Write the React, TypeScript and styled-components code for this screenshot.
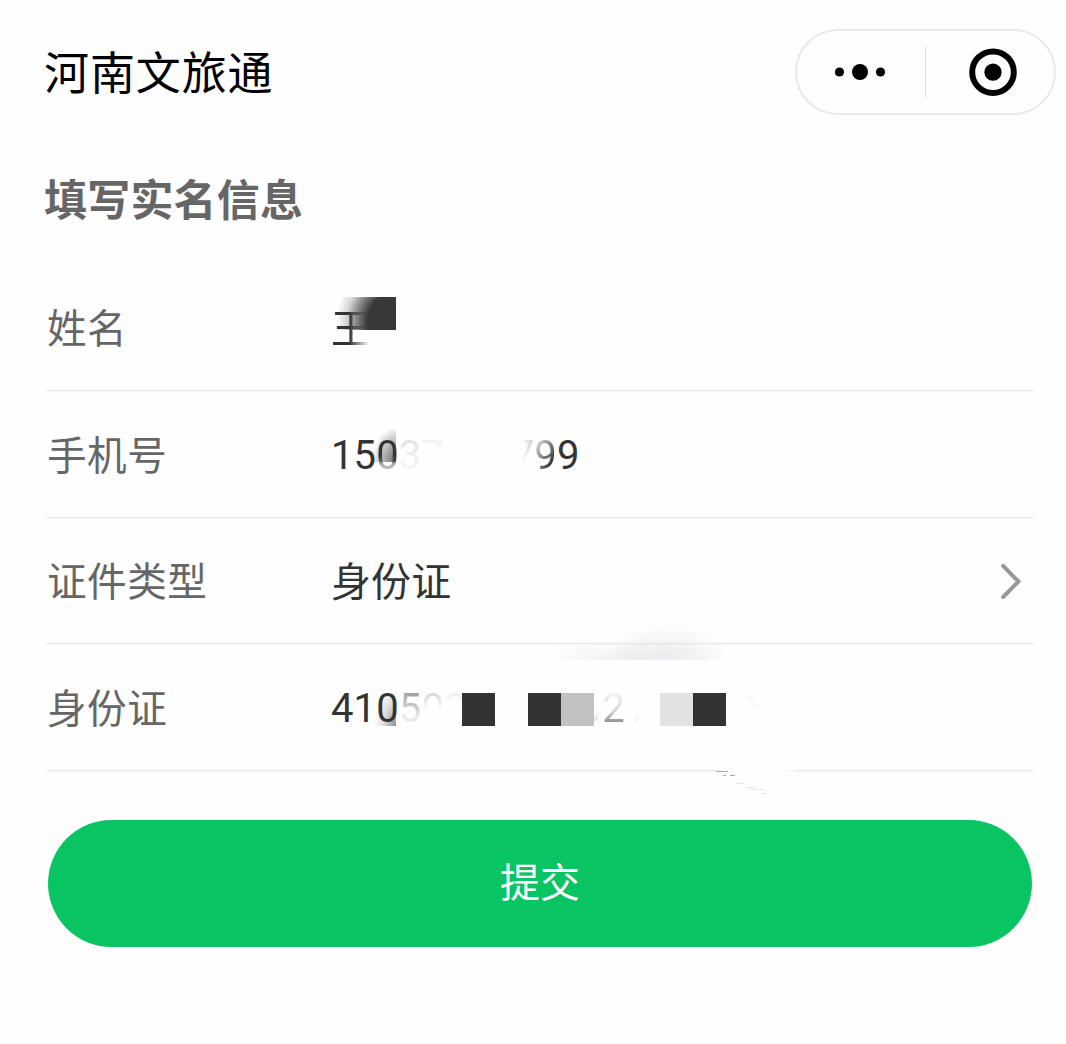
import React from 'react';
import styled, { createGlobalStyle } from 'styled-components';

const GlobalStyle = createGlobalStyle`
  body {
    margin: 0;
    background: #fefefe;
    font-family: Roboto, 'Noto Sans CJK SC', sans-serif;
  }
`;

const Page = styled.main`
  box-sizing: border-box;
  width: 1066px;
  height: 1044px;
  overflow: hidden;
  background: #fefefe;
`;

const TopBar = styled.header`
  display: flex;
  justify-content: space-between;
  align-items: flex-start;
  padding: 29px 10px 0 44px;
  height: 115px;
  box-sizing: border-box;
`;

const AppName = styled.h1`
  margin: 16px 0 0;
  font-size: 45px;
  line-height: 60px;
  letter-spacing: 0.9px;
  font-weight: 400;
  color: #000;
`;

const Capsule = styled.div`
  box-sizing: border-box;
  display: flex;
  align-items: center;
  width: 261px;
  height: 86px;
  border: 2px solid #e9e9e9;
  border-radius: 43px;
`;

const CapsuleButton = styled.button<{ $width: number; $shift: number }>`
  box-sizing: border-box;
  display: flex;
  align-items: center;
  justify-content: center;
  width: ${(p) => p.$width}px;
  padding: 0 0 0 ${(p) => p.$shift}px;
  border: 0;
  background: none;
`;

const CapsuleDivider = styled.span`
  width: 1px;
  height: 52px;
  background: #dedede;
`;

const SectionTitle = styled.h2`
  margin: 56px 0 0 44px;
  font-size: 43px;
  line-height: 60px;
  letter-spacing: 0.2px;
  font-weight: 700;
  color: #666;
`;

const Form = styled.section`
  margin: 33px 32px 0 46px;
`;

const Row = styled.div<{ $height: number }>`
  position: relative;
  box-sizing: border-box;
  display: flex;
  align-items: center;
  height: ${(p) => p.$height}px;
  padding: 5px 11px 0 1px;
  border-bottom: 1px solid #e8e8e8;
  box-shadow: 0 1px 0 #f8f8f8;
`;

const Label = styled.span`
  width: 284px;
  font-size: 39.6px;
  line-height: 60px;
  letter-spacing: 0.5px;
  color: #666;
`;

const Value = styled.span<{ $digits?: boolean }>`
  display: flex;
  flex: 1;
  padding-bottom: ${(p) => (p.$digits ? 2 : 0)}px;
  font-size: 40px;
  line-height: 60px;
  letter-spacing: 0.1px;
  color: #333;
`;

const Glyph = styled.span<{ $mask?: string }>`
  display: inline-block;
  mask-image: ${(p) => p.$mask ?? 'none'};
`;

const Block = styled.span<{ $x: number; $y: number; $w: number; $h?: number; $fill: string }>`
  position: absolute;
  left: ${(p) => p.$x}px;
  top: ${(p) => p.$y}px;
  width: ${(p) => p.$w}px;
  height: ${(p) => p.$h ?? 33}px;
  background: ${(p) => p.$fill};
`;

const Specks = styled.svg`
  position: absolute;
  left: 664px;
  top: 24px;
`;

const Submit = styled.button`
  display: block;
  width: 984px;
  height: 127px;
  margin: 49px 0 0 48px;
  padding: 0;
  border: 0;
  border-radius: 63.5px;
  background: #09c462;
  color: #fff;
  font-family: inherit;
  font-size: 40px;
  line-height: 60px;
`;

type Char = [string, string?];

const solid = (alpha: number) => `linear-gradient(rgba(0,0,0,${alpha}), rgba(0,0,0,${alpha}))`;

const phone: Char[] = [
  ['1'],
  ['5'],
  ['0', 'linear-gradient(175deg, rgba(0,0,0,.3) 34%, #000 50%)'],
  ['3', 'linear-gradient(170deg, rgba(0,0,0,.03) 25%, rgba(0,0,0,.14) 75%)'],
  ['7', 'linear-gradient(rgba(0,0,0,.05) 30%, transparent 45%)'],
  ['0', solid(0)],
  ['0', solid(0)],
  ['0', solid(0)],
  ['7', 'linear-gradient(90deg, transparent 45%, rgba(0,0,0,.25))'],
  ['9', 'linear-gradient(120deg, rgba(0,0,0,.25) 25%, #000 70%)'],
  ['9'],
];

const idNumber: Char[] = [
  ['4'],
  ['1'],
  ['0'],
  ['5', 'linear-gradient(190deg, rgba(0,0,0,.45) 25%, rgba(0,0,0,.1) 60%)'],
  ['0', 'linear-gradient(rgba(0,0,0,.18) 25%, transparent 52%)'],
  ['2', 'linear-gradient(rgba(0,0,0,.08) 25%, transparent 42%)'],
  ['0', solid(0)],
  ['0', solid(0)],
  ['0', solid(0)],
  ['0', solid(0)],
  ['0', solid(0)],
  ['0', 'linear-gradient(transparent 50%, rgba(0,0,0,.16) 75%)'],
  ['2', 'linear-gradient(rgba(0,0,0,.06) 25%, rgba(0,0,0,.2) 55%, rgba(0,0,0,.6) 75%)'],
  ['1', 'linear-gradient(transparent 55%, rgba(0,0,0,.08) 75%)'],
];

const Chars = ({ items }: { items: Char[] }) => (
  <>
    {items.map(([char, mask], i) => (
      <Glyph key={i} $mask={mask}>{char}</Glyph>
    ))}
  </>
);

export default function App() {
  return (
    <Page>
      <GlobalStyle />
      <TopBar>
        <AppName>河南文旅通</AppName>
        <Capsule>
          <CapsuleButton $width={128} $shift={0} aria-label="菜单">
            <svg width="52" height="18" viewBox="1 0 52 18">
              <circle cx="5.5" cy="9" r="4.6" />
              <circle cx="26" cy="9" r="8" />
              <circle cx="46.5" cy="9" r="4.6" />
            </svg>
          </CapsuleButton>
          <CapsuleDivider />
          <CapsuleButton $width={128} $shift={6} aria-label="关闭">
            <svg width="48" height="48" viewBox="0 0 48 48">
              <circle cx="24" cy="24.2" r="20.8" fill="none" stroke="#000" strokeWidth="6" />
              <circle cx="24" cy="24.2" r="8.6" />
            </svg>
          </CapsuleButton>
        </Capsule>
      </TopBar>
      <SectionTitle>填写实名信息</SectionTitle>
      <Form>
        <Row $height={127}>
          <Label>姓名</Label>
          <Value>
            <Glyph $mask="linear-gradient(90deg, #000 45%, transparent 95%)">王</Glyph>
          </Value>
          <Block
            $x={290}
            $y={33}
            $w={60}
            $fill="radial-gradient(ellipse 60px 64px at 100% 80%, #383838 48%, rgba(54,54,54,.6) 66%, rgba(54,54,54,.18) 84%, transparent)"
          />
        </Row>
        <Row $height={127}>
          <Label>手机号</Label>
          <Value $digits><Chars items={phone.map(([c, m], i): Char => {
            if (i === 2) return [c, 'linear-gradient(#000 50%, rgba(0,0,0,.35) 66%)'];
            if (i === 3) return [c, 'linear-gradient(rgba(0,0,0,.13) 25%, rgba(0,0,0,.03) 75%)'];
            return [c, m];
          })} /></Value>
          <Block
            $x={326}
            $y={38}
            $w={24}
            $fill="radial-gradient(ellipse 24px 35px at 100% 100%, rgba(54,54,54,.75), rgba(54,54,54,.4) 50%, transparent)"
          />
        </Row>
        <Row $height={126}>
          <Label>证件类型</Label>
          <Value>身份证</Value>
          <svg width="24" height="38" viewBox="0 0 24 38" fill="none" stroke="#999" strokeWidth="4" strokeLinecap="round" strokeLinejoin="round">
            <path d="M4.2 2 19.5 17.5 4.2 33" />
          </svg>
        </Row>
        <Row $height={127}>
          <Label>身份证</Label>
          <Value $digits><Chars items={idNumber} /></Value>
          <Block
            $x={500}
            $y={-20}
            $w={190}
            $h={36}
            $fill="radial-gradient(ellipse 62px 34px at 122px 90%, rgba(210,215,220,.32), rgba(220,224,228,.22) 60%, transparent), radial-gradient(ellipse 90px 22px at 85px 100%, rgba(215,219,223,.4), transparent)"
          />
          <Block $x={328} $y={49} $w={22} $fill="radial-gradient(ellipse 22px 40px at 100% 100%, rgba(54,54,54,.55), rgba(54,54,54,.15) 60%, transparent)" />
          <Block $x={416} $y={49} $w={33} $fill="#333" />
          <Block $x={482} $y={49} $w={33} $fill="#333" />
          <Block $x={515} $y={49} $w={33} $fill="#c2c2c2" />
          <Block $x={614} $y={49} $w={33} $fill="#e2e2e2" />
          <Block $x={647} $y={49} $w={33} $fill="#333" />
          <Block $x={668} $y={124} $w={86} $h={4} $fill="linear-gradient(90deg, transparent, #fefefe 12% 80%, transparent)" />
          <Specks width="110" height="130" fill="none">
            <path d="M6 103.5h12M13 107.5h3M20 107.5h5" stroke="#aaa" />
            <path d="M27 115.5h7M36 119.5h10M40 121.5h14M52 125.5h5" stroke="#e6e6e6" />
            <path d="M22 8.5h2M35 26l3 4M40 29l3 4M43 35l3 5" stroke="#eee" />
          </Specks>
        </Row>
      </Form>
      <Submit>提交</Submit>
    </Page>
  );
}
